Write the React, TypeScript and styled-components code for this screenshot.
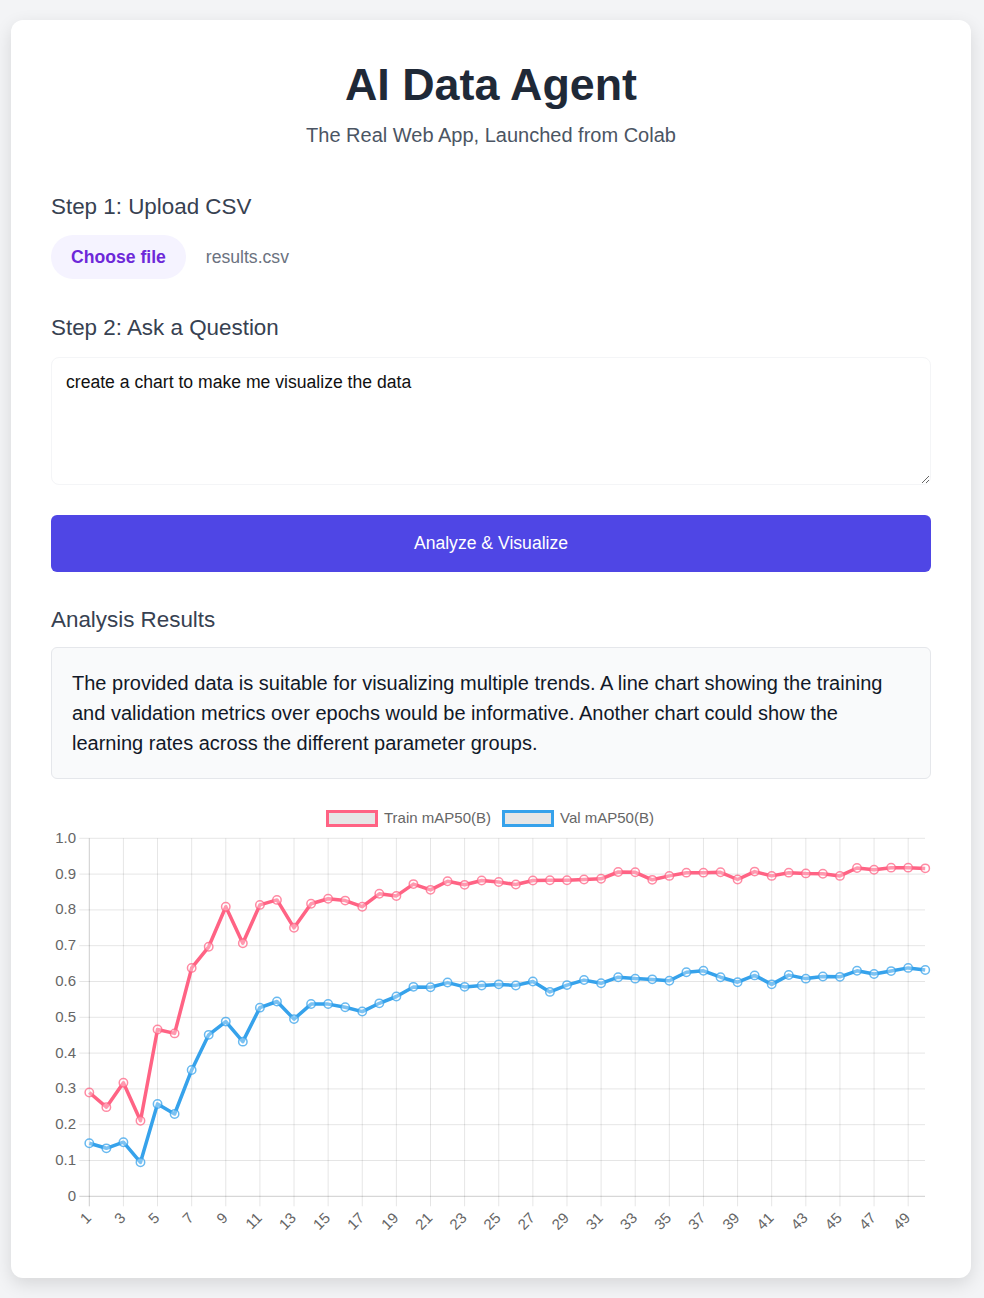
import React from 'react'
import styled, { createGlobalStyle } from 'styled-components'

const GlobalStyle = createGlobalStyle`
  body {
    margin: 0;
    background: #f3f4f6;
    font-family: 'Liberation Sans', Arial, sans-serif;
  }
`

const Card = styled.div`
  box-sizing: border-box;
  width: 960px;
  margin: 20px 13px 20px 11px;
  padding: 40px;
  background: #fff;
  border-radius: 12px;
  box-shadow: 0 6px 18px rgba(0, 0, 0, 0.12);
`

const Header = styled.header`
  text-align: center;
  margin-bottom: 47px;
`

const Title = styled.h1`
  margin: -1px 0 13px;
  font-size: 44.8px;
  line-height: 1.15;
  font-weight: 700;
  color: #1f2937;
`

const Subtitle = styled.p`
  margin: 0;
  font-size: 20px;
  line-height: 23px;
  color: #4b5563;
`

const SectionTitle = styled.h2<{ $gap?: number }>`
  margin: 0 0 ${(p) => p.$gap ?? 16}px;
  font-size: 22.4px;
  line-height: 1.15;
  font-weight: 400;
  color: #374151;
`

const FileRow = styled.div`
  display: flex;
  align-items: center;
  gap: 20px;
  margin-bottom: 36px;
  font-size: 17.6px;
`

const FileButton = styled.button`
  height: 44px;
  padding: 0 20px;
  border: none;
  border-radius: 22px;
  background: #f5f3ff;
  color: #6d28d9;
  font-family: inherit;
  font-size: 17.6px;
  font-weight: 700;
  cursor: pointer;
`

const FileName = styled.span`
  color: #6b7280;
`

const Question = styled.textarea`
  display: block;
  box-sizing: border-box;
  width: 100%;
  height: 128px;
  margin: 16px 0 30px;
  padding: 14px;
  border: 1px solid #f4f5f7;
  border-radius: 8px;
  font-family: inherit;
  font-size: 17.6px;
  line-height: normal;
  color: #111;
  resize: vertical;
  outline: none;
`

const AnalyzeButton = styled.button`
  display: block;
  width: 100%;
  height: 57px;
  margin-bottom: 35px;
  border: none;
  border-radius: 6px;
  background: #4f46e5;
  color: #fff;
  font-family: inherit;
  font-size: 17.6px;
  cursor: pointer;
`

const ResultBox = styled.div`
  padding: 20px;
  border: 1px solid #e5e7eb;
  border-radius: 6px;
  background: #f9fafb;
  font-size: 20px;
  line-height: 30px;
  color: #111827;
`

const ChartWrap = styled.div`
  margin-top: 21px;
  height: 438px;

  svg {
    display: block;
    font-family: 'Liberation Sans', Arial, sans-serif;
  }
`

const train = [
  0.29, 0.249, 0.317, 0.211, 0.466, 0.455, 0.638, 0.697, 0.809, 0.707,
  0.814, 0.828, 0.75, 0.817, 0.831, 0.826, 0.809, 0.845, 0.839, 0.872,
  0.856, 0.88, 0.87, 0.882, 0.878, 0.871, 0.882, 0.883, 0.883, 0.885,
  0.887, 0.906, 0.905, 0.884, 0.895, 0.904, 0.904, 0.905, 0.885, 0.907,
  0.895, 0.904, 0.902, 0.901, 0.895, 0.917, 0.912, 0.918, 0.918, 0.916,
]

const val = [
  0.148, 0.134, 0.151, 0.095, 0.258, 0.23, 0.353, 0.451, 0.488, 0.432,
  0.527, 0.544, 0.495, 0.537, 0.537, 0.528, 0.516, 0.539, 0.558, 0.585,
  0.584, 0.597, 0.585, 0.589, 0.592, 0.589, 0.6, 0.571, 0.59, 0.604,
  0.595, 0.612, 0.608, 0.606, 0.602, 0.626, 0.63, 0.612, 0.598, 0.617,
  0.592, 0.618, 0.608, 0.614, 0.613, 0.63, 0.621, 0.629, 0.638, 0.632,
]

const RED = 'rgb(255, 99, 132)'
const BLUE = 'rgb(54, 162, 235)'

// plot geometry, in svg coords
const X0 = 38.3
const XSTEP = 17.06
const YBASE = 396.3
const YSPAN = 358
const XRIGHT = 874
const px = (i: number) => X0 + i * XSTEP
const py = (v: number) => YBASE - v * YSPAN

function Series({ data, color }: { data: number[]; color: string }) {
  const d = data.map((v, i) => `${i ? 'L' : 'M'}${px(i).toFixed(1)},${py(v).toFixed(1)}`).join(' ')
  return (
    <g>
      <path d={d} fill="none" stroke={color} strokeWidth={3.5} strokeLinejoin="round" />
      {data.map((v, i) => (
        <circle
          key={i}
          cx={px(i)}
          cy={py(v)}
          r={4.2}
          fill="rgba(255,255,255,0.35)"
          stroke={color}
          strokeOpacity={0.75}
          strokeWidth={1.5}
        />
      ))}
    </g>
  )
}

function Chart() {
  const yTicks = [0, 0.1, 0.2, 0.3, 0.4, 0.5, 0.6, 0.7, 0.8, 0.9, 1]
  const xTicks = Array.from({ length: 25 }, (_, k) => k * 2)
  return (
    <svg width={880} height={438} viewBox="0 0 880 438">
      {/* legend */}
      <rect x={276.5} y={11.5} width={49} height={14} fill="#e6e6e6" stroke={RED} strokeWidth={3} />
      <text x={333} y={19} fontSize={15} fill="#666" dominantBaseline="middle">
        Train mAP50(B)
      </text>
      <rect x={452.5} y={11.5} width={49} height={14} fill="#e6e6e6" stroke={BLUE} strokeWidth={3} />
      <text x={509} y={19} fontSize={15} fill="#666" dominantBaseline="middle">
        Val mAP50(B)
      </text>

      {/* grid */}
      {yTicks.map((t) => (
        <g key={t}>
          <line
            x1={28.3}
            x2={XRIGHT}
            y1={py(t)}
            y2={py(t)}
            stroke={t === 0 ? 'rgba(0,0,0,0.2)' : 'rgba(0,0,0,0.1)'}
          />
          <text x={25} y={py(t) + 0.5} fontSize={15} fill="#666" textAnchor="end" dominantBaseline="middle">
            {t === 0 ? '0' : t.toFixed(1)}
          </text>
        </g>
      ))}
      {xTicks.map((i) => (
        <g key={i}>
          <line
            x1={px(i)}
            x2={px(i)}
            y1={py(1)}
            y2={YBASE + 10}
            stroke={i === 0 ? 'rgba(0,0,0,0.2)' : 'rgba(0,0,0,0.1)'}
          />
          <text
            transform={`translate(${px(i) - 5}, 411) rotate(-45)`}
            fontSize={15}
            fill="#666"
            textAnchor="end"
            dominantBaseline="hanging"
          >
            {i + 1}
          </text>
        </g>
      ))}

      <Series data={train} color={RED} />
      <Series data={val} color={BLUE} />
    </svg>
  )
}

function App() {
  return (
    <>
      <GlobalStyle />
      <Card>
        <Header>
          <Title>AI Data Agent</Title>
          <Subtitle>The Real Web App, Launched from Colab</Subtitle>
        </Header>

        <SectionTitle>Step 1: Upload CSV</SectionTitle>
        <FileRow>
          <FileButton>Choose file</FileButton>
          <FileName>results.csv</FileName>
        </FileRow>

        <SectionTitle $gap={0}>Step 2: Ask a Question</SectionTitle>
        <Question defaultValue="create a chart to make me visualize the data" />
        <AnalyzeButton>Analyze &amp; Visualize</AnalyzeButton>

        <SectionTitle $gap={14}>Analysis Results</SectionTitle>
        <ResultBox>
          The provided data is suitable for visualizing multiple trends. A line chart showing the
          training and validation metrics over epochs would be informative. Another chart could show
          the learning rates across the different parameter groups.
        </ResultBox>

        <ChartWrap>
          <Chart />
        </ChartWrap>
      </Card>
    </>
  )
}

export default App
